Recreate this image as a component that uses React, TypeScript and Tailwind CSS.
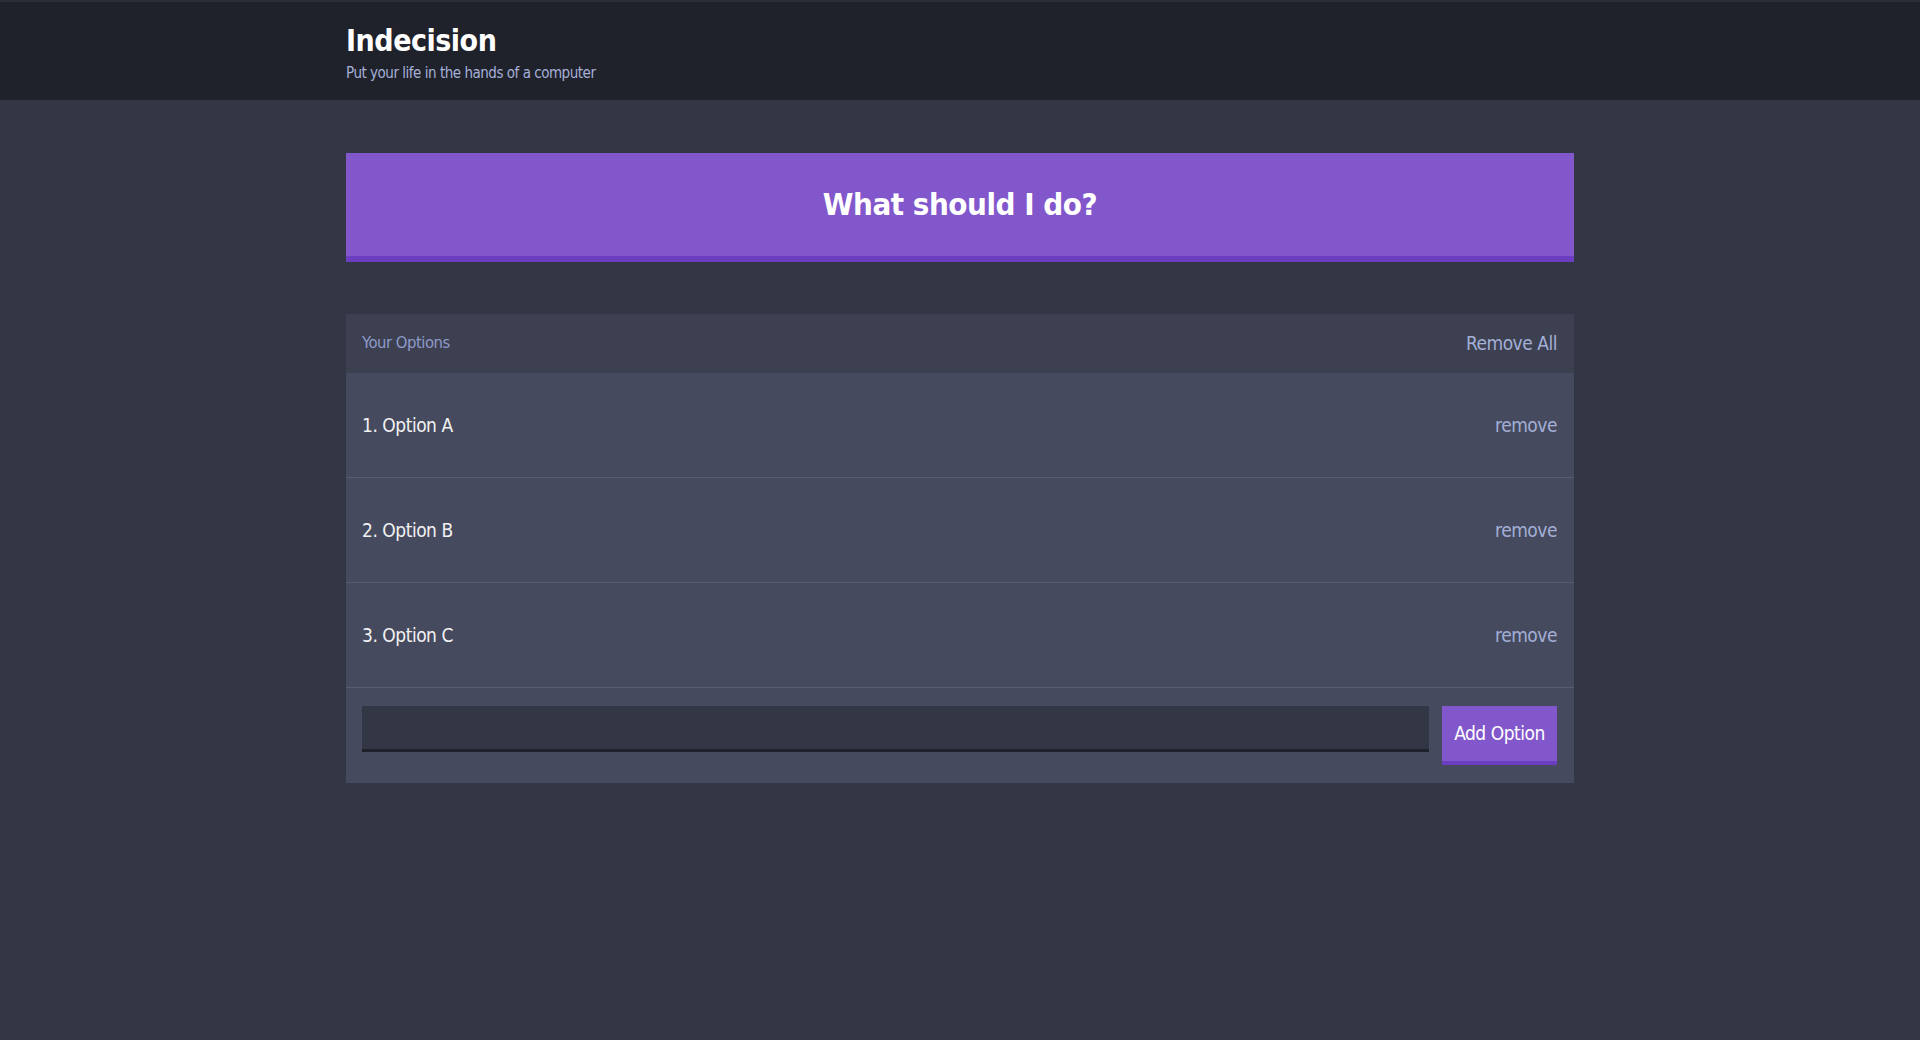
const font = "[font-family:'Liberation_Sans_Narrow','DejaVu_Sans_Condensed',sans-serif] [font-stretch:condensed] tracking-[-0.03em]";

const options = ["Option A", "Option B", "Option C"];

const OptionRow = ({ index, text }: { index: number; text: string }) => (
  <div className="flex h-[105px] items-center justify-between border-b border-[#585c70] pl-4 pr-[17px]">
    <p className="text-[19px] text-[#f2f2f2]">
      {index}. {text}
    </p>
    <button className="text-[19px] text-[#a3afd6]">remove</button>
  </div>
);

export default function App() {
  return (
    <div className={`min-h-screen bg-[#333645] ${font}`}>
      <header className="h-[100px] border-t-2 border-[#2a2c36] bg-[#20222b]">
        <div className="mx-auto flex w-[1228px] flex-col pt-[22px]">
          <h1 className="text-[30px] font-bold leading-[34px] text-white">Indecision</h1>
          <h2 className="mt-[4px] text-[15px] leading-[22px] text-[#a5afd7]">Put your life in the hands of a computer</h2>
        </div>
      </header>

      <main className="mx-auto w-[1228px] pt-[53px]">
        <button className="flex h-[109px] w-full items-center justify-center border-b-[6px] border-[#6b3dc0] bg-[#8357cc] text-[31px] font-bold text-white">
          What should I do?
        </button>

        <div className="mt-[52px] bg-[#464a5e]">
          <div className="flex h-[59px] items-center justify-between bg-[#3d4051] pl-4 pr-[17px]">
            <h3 className="text-[16.5px] text-[#8e9bc9]">Your Options</h3>
            <button className="text-[19px] text-[#a3afd6]">Remove All</button>
          </div>
          {options.map((item, i) => (
            <OptionRow key={item} index={i + 1} text={item} />
          ))}
          <form className="flex items-start gap-[13px] pl-4 pr-[17px] pt-[18px] pb-[18px]" onSubmit={(e) => e.preventDefault()}>
            <input
              type="text"
              className="h-[46px] flex-1 border-b-[3px] border-[#20222b] bg-[#333645] px-3 text-white outline-none"
            />
            <button className="h-[59px] w-[115px] border-b-[4px] border-[#6b3dc0] bg-[#8357cc] text-[19px] text-white">
              Add Option
            </button>
          </form>
        </div>
      </main>
    </div>
  );
}
